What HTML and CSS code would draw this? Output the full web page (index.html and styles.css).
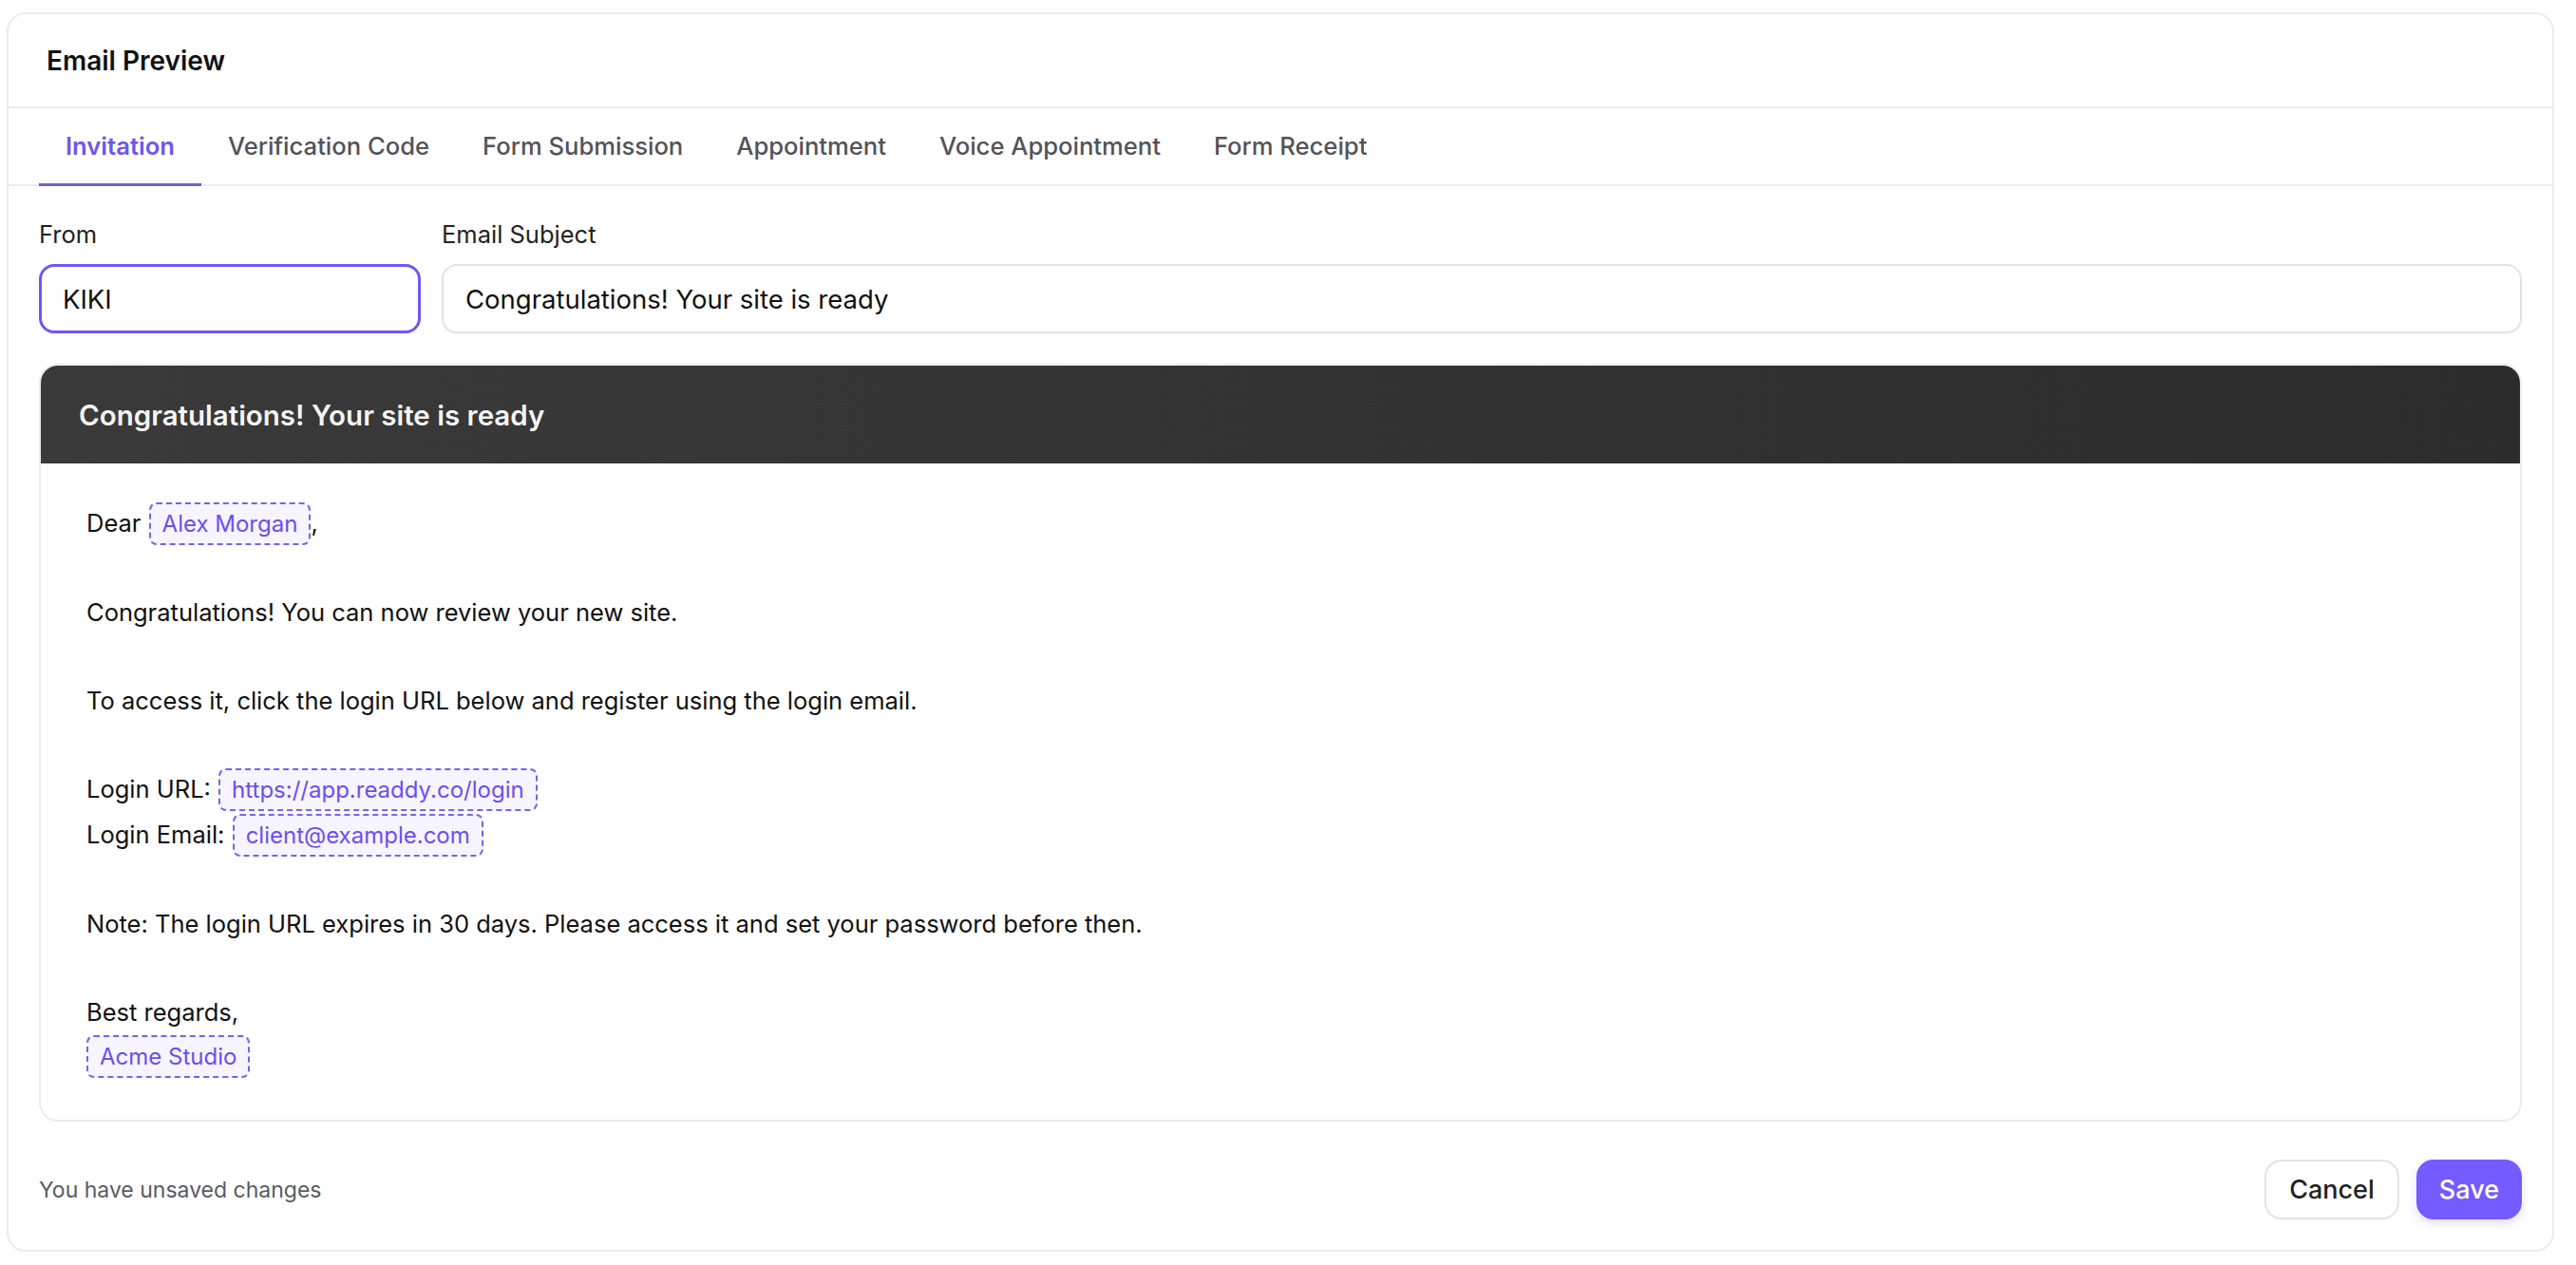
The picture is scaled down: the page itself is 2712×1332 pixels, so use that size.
FILE: index.html
```html
<html><head>
  <meta charset="UTF-8">
  <meta name="viewport" content="width=device-width, initial-scale=1.0">
  <title>Email Preview</title>
  <link rel="stylesheet" href="styles.css">
</head>
<body>
  <div class="panel">
    <div class="panel-header">
      <h1>Email Preview</h1>
    </div>
    <div class="tabs">
      <div class="tab active">Invitation</div>
      <div class="tab">Verification Code</div>
      <div class="tab">Form Submission</div>
      <div class="tab">Appointment</div>
      <div class="tab">Voice Appointment</div>
      <div class="tab">Form Receipt</div>
    </div>
    <div class="panel-body">
      <div class="fields">
        <div class="field field-from">
          <label>From</label>
          <input class="input focused" type="text" value="KIKI">
        </div>
        <div class="field field-subject">
          <label>Email Subject</label>
          <input class="input" type="text" value="Congratulations! Your site is ready">
        </div>
      </div>
      <div class="email">
        <div class="email-head">Congratulations! Your site is ready</div>
        <div class="email-body">
          <p>Dear <span class="var">Alex Morgan</span>,</p>
          <p>Congratulations! You can now review your new site.</p>
          <p>To access it, click the login URL below and register using the login email.</p>
          <p>Login URL: <span class="var">https://app.readdy.co/login</span><br>
             Login Email: <span class="var">client@example.com</span></p>
          <p>Note: The login URL expires in 30 days. Please access it and set your password before then.</p>
          <p>Best regards,<br><span class="var">Acme Studio</span></p>
        </div>
      </div>
      <div class="footer">
        <span class="unsaved">You have unsaved changes</span>
        <div class="actions">
          <button class="btn btn-cancel">Cancel</button>
          <button class="btn btn-save">Save</button>
        </div>
      </div>
    </div>
  </div>
</body>
</html>
```

FILE: styles.css
```css
html, body {
  margin: 0;
  padding: 0;
  background-color: #ffffff;
  font-family: 'Inter', 'Noto Sans', sans-serif;
  color: #111111;
}
body {
  padding: 13px 23px 15px 7px;
}
.panel {
  border: 2px solid #ebebef;
  border-radius: 20px;
  background-color: #fff;
}
.panel-header {
  height: 97px;
  display: flex;
  align-items: center;
  padding: 0 40px;
  border-bottom: 2px solid #ebebef;
}
.panel-header h1 {
  margin: 0;
  font-size: 28px;
  font-weight: 600;
  color: #111;
}
.tabs {
  display: flex;
  padding: 0 32px;
  border-bottom: 2px solid #ebebef;
}
.tab {
  height: 79px;
  display: flex;
  align-items: center;
  padding: 0 28px;
  font-size: 25.6px;
  font-weight: 500;
  color: #52525b;
  border-bottom: 3px solid transparent;
  margin-bottom: -2px;
}
.tab.active {
  color: #6c57ee;
  font-weight: 600;
  border-bottom-color: #6f60d2;
}
.panel-body {
  padding: 33px 32px 32px;
}
.fields {
  display: flex;
  gap: 22px;
}
.field {
  display: flex;
  flex-direction: column;
}
.field-from {
  width: 402px;
}
.field-subject {
  flex: 1;
}
.field label {
  font-size: 25.5px;
  line-height: 36px;
  color: #222;
  margin-bottom: 13px;
}
.input {
  height: 73px;
  box-sizing: border-box;
  border: 2px solid #e3e3e8;
  border-radius: 16px;
  padding: 0 23px;
  font-family: 'Inter', 'Noto Sans', sans-serif;
  font-size: 27.5px;
  color: #111;
  background: #fff;
  outline: none;
  box-shadow: 0 1px 2px rgba(0,0,0,0.04);
}
.input.focused {
  border: 3px solid #6e57f6;
  padding: 0 22px;
}
.email {
  margin-top: 32px;
  border: 2px solid #ececef;
  border-radius: 20px;
  overflow: hidden;
}
.email-head {
  height: 103px;
  display: flex;
  align-items: center;
  padding: 0 40px;
  background: linear-gradient(to right, #3a3a3a, #2c2c2c);
  color: #f5f5f5;
  font-size: 29.5px;
  font-weight: 600;
}
.email-body {
  padding: 39px 48px 43px;
  font-size: 25.5px;
  line-height: 47px;
  color: #111;
}
.email-body p {
  margin: 0 0 46px;
}
.email-body p:last-child {
  margin-bottom: 0;
}
.var {
  display: inline;
  padding: 6px 12px;
  margin-left: 1px;
  font-size: 24px;
  color: #6a4ff0;
  background-color: #f6f4ff;
  border: 2px dashed #7762ee;
  border-radius: 8px;
}
.email-body p:last-child .var {
  margin-left: 0;
}
.footer {
  display: flex;
  justify-content: space-between;
  align-items: center;
  margin-top: 40px;
}
.unsaved {
  font-size: 23px;
  color: #555b66;
}
.actions {
  display: flex;
  gap: 18px;
}
.btn {
  height: 63px;
  border-radius: 18px;
  font-family: 'Inter', 'Noto Sans', sans-serif;
  font-size: 27px;
  font-weight: 500;
  cursor: pointer;
}
.btn-cancel {
  padding: 0 24px;
  background: #fff;
  color: #222;
  border: 2px solid #e4e4e7;
}
.btn-save {
  padding: 0 24px;
  background: #735bff;
  color: #fff;
  border: none;
  box-shadow: 0 4px 10px rgba(115,91,255,0.22);
}
```
